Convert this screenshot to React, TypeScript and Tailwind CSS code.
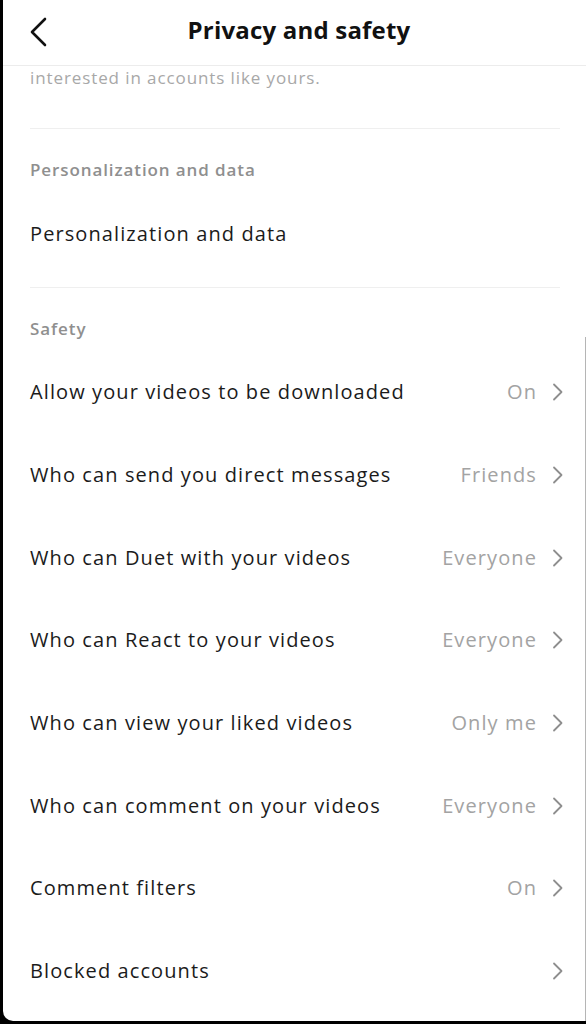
const safetyRows = [
  { label: "Allow your videos to be downloaded", value: "On" },
  { label: "Who can send you direct messages", value: "Friends" },
  { label: "Who can Duet with your videos", value: "Everyone" },
  { label: "Who can React to your videos", value: "Everyone" },
  { label: "Who can view your liked videos", value: "Only me" },
  { label: "Who can comment on your videos", value: "Everyone" },
  { label: "Comment filters", value: "On" },
  { label: "Blocked accounts", value: "" },
];

function Chevron() {
  return (
    <svg width="12" height="18" viewBox="0 0 12 18" fill="none">
      <polyline points="2,1.5 9.5,9 2,16.5" stroke="#8e8e8e" strokeWidth="1.8" strokeLinecap="round" strokeLinejoin="round" />
    </svg>
  );
}

function Row({ label, value }: { label: string; value: string }) {
  return (
    <div className="flex h-[82.7px] items-center justify-between pl-[27px] pr-[22px]">
      <span className="text-[20px] leading-[24px] tracking-[1.1px] text-[#1b1b1b]">{label}</span>
      <div className="flex items-center gap-[15px]">
        {value && <span className="text-[20px] leading-[24px] tracking-[1.1px] text-[#a3a3a3]">{value}</span>}
        <Chevron />
      </div>
    </div>
  );
}

export default function App() {
  return (
    <div className="h-[1024px] w-full overflow-hidden bg-black pb-[3px] pl-[3px]" style={{ fontFamily: '"Open Sans", sans-serif' }}>
      <div className="relative h-full overflow-hidden rounded-bl-[10px] bg-white">
        {/* Header */}
        <div className="relative flex h-[66px] items-center justify-center border-b border-[#ececec] pb-[5px] pl-[9px]">
          <svg className="absolute left-[25px] top-[17px]" width="22" height="30" viewBox="0 0 22 30" fill="none">
            <polyline points="17,2 4,15 17,28" stroke="#111" strokeWidth="2.6" strokeLinecap="round" strokeLinejoin="round" />
          </svg>
          <h1 className="text-[24px] font-bold tracking-[0.2px] text-[#111]">Privacy and safety</h1>
        </div>

        {/* Intro text */}
        <div className="pl-[27px] pr-[26px]">
          <p className="text-[17px] leading-[24px] tracking-[0.9px] text-[#a8a8a8]">interested in accounts like yours.</p>
          <div className="mt-[38px] h-px bg-[#efefef]" />
        </div>

        {/* Personalization */}
        <div className="pl-[27px] pr-[26px]">
          <p className="pt-[29px] text-[17px] font-semibold leading-[24px] tracking-[0.9px] text-[#8f8f8f]">Personalization and data</p>
          <p className="mt-[40px] text-[20px] leading-[24px] tracking-[1.1px] text-[#1b1b1b]">Personalization and data</p>
          <div className="mt-[41px] h-px bg-[#efefef]" />
        </div>

        {/* Safety */}
        <div className="pl-[27px]">
          <p className="pt-[29px] text-[17px] font-semibold leading-[24px] tracking-[0.9px] text-[#8f8f8f]">Safety</p>
        </div>
        <div className="mt-[10px]">
          {safetyRows.map((r) => (
            <Row key={r.label} label={r.label} value={r.value} />
          ))}
        </div>

        {/* scroll edge */}
        <div className="absolute bottom-0 right-0 top-[337px] w-px bg-[#b5b5b5]" />
      </div>
    </div>
  );
}
